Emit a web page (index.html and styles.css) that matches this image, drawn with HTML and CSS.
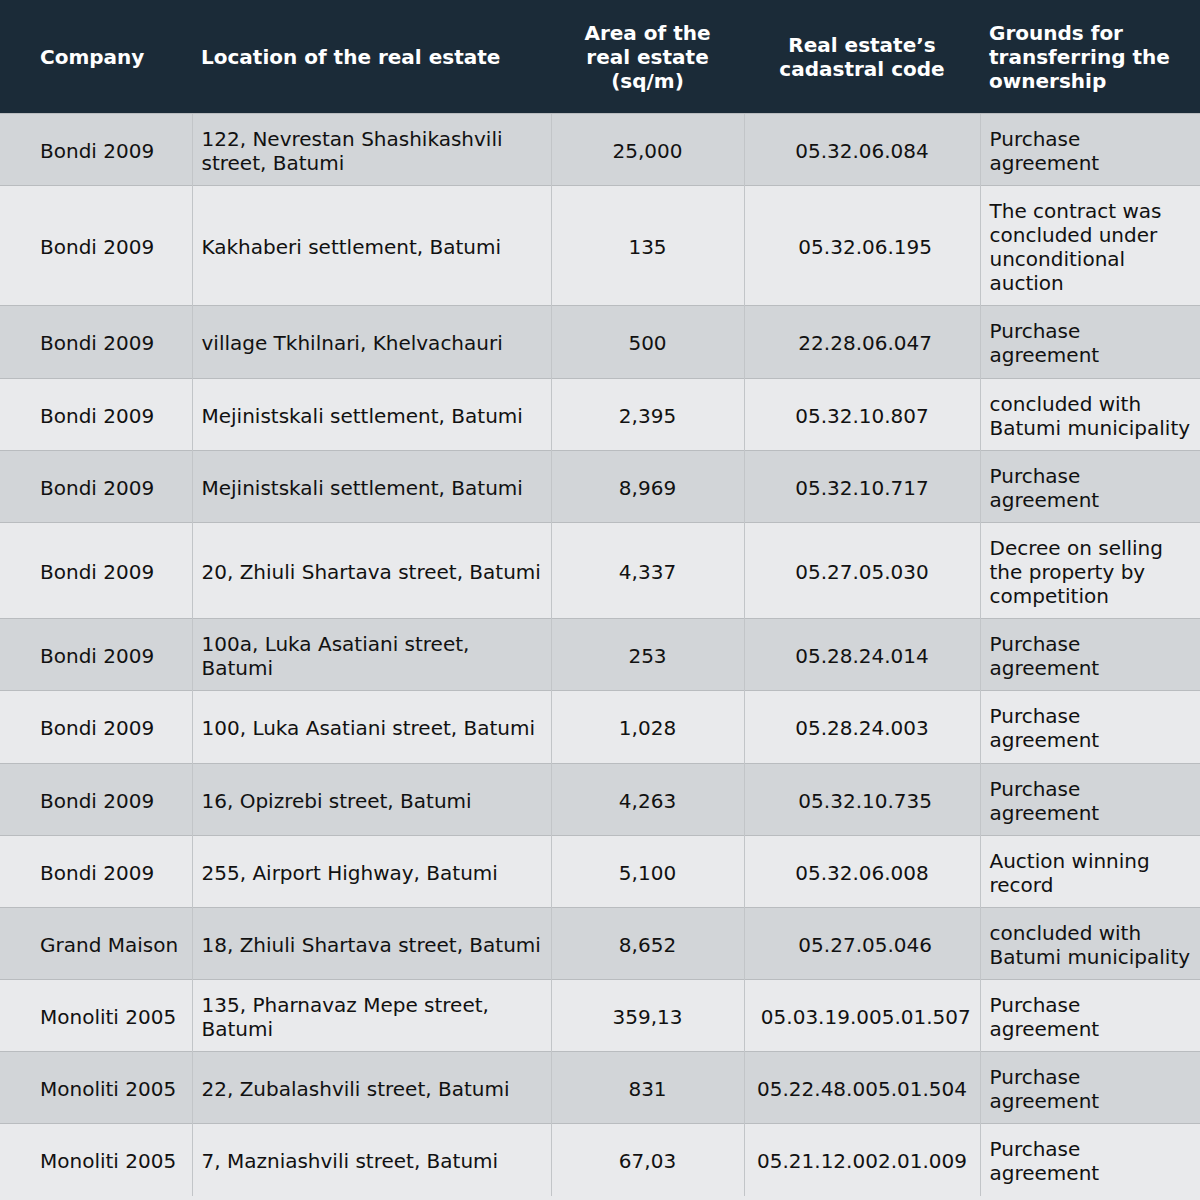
FILE: index.html
```html
<!DOCTYPE html>
<html lang="en">
<head>
<meta charset="utf-8">
<title>Real estate</title>
<link rel="stylesheet" href="styles.css">
</head>
<body>
<table class="estate">
<colgroup>
<col class="c1"><col class="c2"><col class="c3"><col class="c4"><col class="c5">
</colgroup>
<thead>
<tr>
<th class="company">Company</th>
<th class="left">Location of the real estate</th>
<th class="center">Area of the<br>real estate<br>(sq/m)</th>
<th class="center">Real estate’s<br>cadastral code</th>
<th class="left last">Grounds for<br>transferring the<br>ownership</th>
</tr>
</thead>
<tbody>
<tr class="dark"><td class="company">Bondi 2009</td><td class="left">122, Nevrestan Shashikashvili<br>street, Batumi</td><td class="center">25,000</td><td class="center">05.32.06.084</td><td class="left last">Purchase<br>agreement</td></tr>
<tr class="light"><td class="company">Bondi 2009</td><td class="left">Kakhaberi settlement, Batumi</td><td class="center">135</td><td class="center">&nbsp;05.32.06.195</td><td class="left last">The contract was<br>concluded under<br>unconditional<br>auction</td></tr>
<tr class="dark"><td class="company">Bondi 2009</td><td class="left">village Tkhilnari, Khelvachauri</td><td class="center">500</td><td class="center">&nbsp;22.28.06.047</td><td class="left last">Purchase<br>agreement</td></tr>
<tr class="light"><td class="company">Bondi 2009</td><td class="left">Mejinistskali settlement, Batumi</td><td class="center">2,395</td><td class="center">05.32.10.807</td><td class="left last">concluded with<br>Batumi municipality</td></tr>
<tr class="dark"><td class="company">Bondi 2009</td><td class="left">Mejinistskali settlement, Batumi</td><td class="center">8,969</td><td class="center">05.32.10.717</td><td class="left last">Purchase<br>agreement</td></tr>
<tr class="light"><td class="company">Bondi 2009</td><td class="left">20, Zhiuli Shartava street, Batumi</td><td class="center">4,337</td><td class="center">05.27.05.030</td><td class="left last">Decree on selling<br>the property by<br>competition</td></tr>
<tr class="dark"><td class="company">Bondi 2009</td><td class="left">100a, Luka Asatiani street,<br>Batumi</td><td class="center">253</td><td class="center">05.28.24.014</td><td class="left last">Purchase<br>agreement</td></tr>
<tr class="light"><td class="company">Bondi 2009</td><td class="left">100, Luka Asatiani street, Batumi</td><td class="center">1,028</td><td class="center">05.28.24.003</td><td class="left last">Purchase<br>agreement</td></tr>
<tr class="dark"><td class="company">Bondi 2009</td><td class="left">16, Opizrebi street, Batumi</td><td class="center">4,263</td><td class="center">&nbsp;05.32.10.735</td><td class="left last">Purchase<br>agreement</td></tr>
<tr class="light"><td class="company">Bondi 2009</td><td class="left">255, Airport Highway, Batumi</td><td class="center">5,100</td><td class="center">05.32.06.008</td><td class="left last">Auction winning<br>record</td></tr>
<tr class="dark"><td class="company">Grand Maison</td><td class="left">18, Zhiuli Shartava street, Batumi</td><td class="center">8,652</td><td class="center">&nbsp;05.27.05.046</td><td class="left last">concluded with<br>Batumi municipality</td></tr>
<tr class="light"><td class="company">Monoliti 2005</td><td class="left">135, Pharnavaz Mepe street,<br>Batumi</td><td class="center">359,13</td><td class="center">&nbsp;05.03.19.005.01.507</td><td class="left last">Purchase<br>agreement</td></tr>
<tr class="dark"><td class="company">Monoliti 2005</td><td class="left">22, Zubalashvili street, Batumi</td><td class="center">831</td><td class="center">05.22.48.005.01.504</td><td class="left last">Purchase<br>agreement</td></tr>
<tr class="light"><td class="company">Monoliti 2005</td><td class="left">7, Mazniashvili street, Batumi</td><td class="center">67,03</td><td class="center">05.21.12.002.01.009</td><td class="left last">Purchase<br>agreement</td></tr>
</tbody>
</table>
</body>
</html>
```
FILE: styles.css
```css
html, body {
  margin: 0;
  padding: 0;
  background: #e9eaec;
}
.estate {
  width: 1200px;
  border-collapse: collapse;
  table-layout: fixed;
  font-family: "DejaVu Sans", sans-serif;
  font-size: 20px;
  line-height: 24px;
  color: #111;
}
.c1 { width: 192px; }
.c2 { width: 359px; }
.c3 { width: 193px; }
.c4 { width: 236px; }
.c5 { width: 220px; }
.estate th {
  background: #1b2b38;
  color: #fff;
  font-weight: bold;
  padding: 20.5px 10px;
  vertical-align: middle;
  border: none;
}
.estate td {
  padding: 13px 10px 10.2px;
  vertical-align: middle;
  border-top: 1px solid #b9bcbf;
  border-left: 1px solid #c2c5c8;
}
.estate td.company { border-left: none; }
.company { text-align: left; padding-left: 40px !important; }
.left { text-align: left; white-space: nowrap; padding-left: 9px !important; padding-right: 2px !important; }
.center { text-align: center; }
.last { padding-right: 2px !important; }
.dark td { background: #d2d5d8; }
.light td { background: #e9eaec; }
```
